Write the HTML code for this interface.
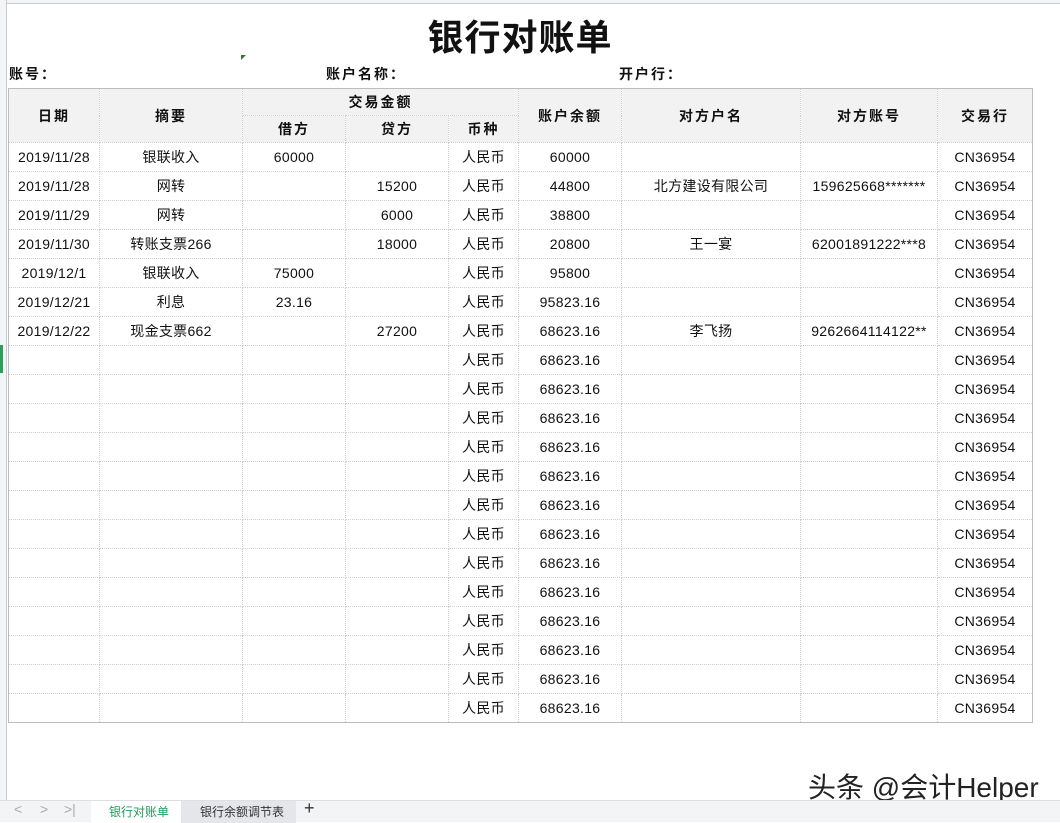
<!DOCTYPE html>
<html><head><meta charset="utf-8"><style>
*{margin:0;padding:0;box-sizing:border-box}
body{width:1060px;height:822px;background:#fff;position:relative;overflow:hidden;font-family:"Liberation Sans","Noto Sans CJK SC",sans-serif;color:#111}
.top{position:absolute;left:0;top:0;width:1060px;height:4px;border-bottom:1px solid #c8cdd4;background:#f3f4f6}
.rh{position:absolute;left:0;top:0;width:7px;height:800px;border-right:1px solid #c8cdd4;background:#f3f4f6}
.title{position:absolute;left:0;width:1040px;top:9px;text-align:center;font-size:36px;font-weight:bold;letter-spacing:1px}
.lab{position:absolute;top:64px;font-size:14px;font-weight:bold;letter-spacing:2px}
table{position:absolute;left:8px;top:88px;border-collapse:collapse;table-layout:fixed;border:1px solid #bdbdbd}
td,th{border:1px dotted #cfcfcf;text-align:center;font-size:14px;white-space:nowrap;overflow:hidden}
th{background:#f2f2f2;font-weight:bold;height:27px;letter-spacing:2px}
td{height:29px;letter-spacing:0.3px}
.tabs{position:absolute;left:0;top:800px;width:1060px;height:22px;background:#f3f4f6;border-top:1px solid #dcdfe3;font-size:12px;color:#333}
.tabs span{position:absolute;top:2px}
.wm{position:absolute;left:808px;top:766px;font-size:28px;color:#222;text-shadow:1px 1px 1px #fff,-1px -1px 1px #fff}
</style></head><body>
<div class="top"></div><div class="rh"></div>
<div class="title">银行对账单</div>
<div style="position:absolute;left:241px;top:55px;width:0;height:0;border-top:5px solid #2d7a2d;border-right:5px solid transparent"></div>
<div class="lab" style="left:9px">账号：</div>
<div class="lab" style="left:326px">账户名称：</div>
<div class="lab" style="left:619px">开户行：</div>
<table>
<colgroup><col style="width:91px"><col style="width:143px"><col style="width:103px"><col style="width:103px"><col style="width:70px"><col style="width:103px"><col style="width:179px"><col style="width:137px"><col style="width:95px"></colgroup>
<tr><th rowspan="2">日期</th><th rowspan="2">摘要</th><th colspan="3">交易金额</th><th rowspan="2">账户余额</th><th rowspan="2">对方户名</th><th rowspan="2">对方账号</th><th rowspan="2">交易行</th></tr>
<tr><th>借方</th><th>贷方</th><th>币种</th></tr>
<tr><td>2019/11/28</td><td>银联收入</td><td>60000</td><td></td><td>人民币</td><td>60000</td><td></td><td></td><td>CN36954</td></tr>
<tr><td>2019/11/28</td><td>网转</td><td></td><td>15200</td><td>人民币</td><td>44800</td><td>北方建设有限公司</td><td>159625668*******</td><td>CN36954</td></tr>
<tr><td>2019/11/29</td><td>网转</td><td></td><td>6000</td><td>人民币</td><td>38800</td><td></td><td></td><td>CN36954</td></tr>
<tr><td>2019/11/30</td><td>转账支票266</td><td></td><td>18000</td><td>人民币</td><td>20800</td><td>王一宴</td><td>62001891222***8</td><td>CN36954</td></tr>
<tr><td>2019/12/1</td><td>银联收入</td><td>75000</td><td></td><td>人民币</td><td>95800</td><td></td><td></td><td>CN36954</td></tr>
<tr><td>2019/12/21</td><td>利息</td><td>23.16</td><td></td><td>人民币</td><td>95823.16</td><td></td><td></td><td>CN36954</td></tr>
<tr><td>2019/12/22</td><td>现金支票662</td><td></td><td>27200</td><td>人民币</td><td>68623.16</td><td>李飞扬</td><td>9262664114122**</td><td>CN36954</td></tr>
<tr><td></td><td></td><td></td><td></td><td>人民币</td><td>68623.16</td><td></td><td></td><td>CN36954</td></tr>
<tr><td></td><td></td><td></td><td></td><td>人民币</td><td>68623.16</td><td></td><td></td><td>CN36954</td></tr>
<tr><td></td><td></td><td></td><td></td><td>人民币</td><td>68623.16</td><td></td><td></td><td>CN36954</td></tr>
<tr><td></td><td></td><td></td><td></td><td>人民币</td><td>68623.16</td><td></td><td></td><td>CN36954</td></tr>
<tr><td></td><td></td><td></td><td></td><td>人民币</td><td>68623.16</td><td></td><td></td><td>CN36954</td></tr>
<tr><td></td><td></td><td></td><td></td><td>人民币</td><td>68623.16</td><td></td><td></td><td>CN36954</td></tr>
<tr><td></td><td></td><td></td><td></td><td>人民币</td><td>68623.16</td><td></td><td></td><td>CN36954</td></tr>
<tr><td></td><td></td><td></td><td></td><td>人民币</td><td>68623.16</td><td></td><td></td><td>CN36954</td></tr>
<tr><td></td><td></td><td></td><td></td><td>人民币</td><td>68623.16</td><td></td><td></td><td>CN36954</td></tr>
<tr><td></td><td></td><td></td><td></td><td>人民币</td><td>68623.16</td><td></td><td></td><td>CN36954</td></tr>
<tr><td></td><td></td><td></td><td></td><td>人民币</td><td>68623.16</td><td></td><td></td><td>CN36954</td></tr>
<tr><td></td><td></td><td></td><td></td><td>人民币</td><td>68623.16</td><td></td><td></td><td>CN36954</td></tr>
<tr><td></td><td></td><td></td><td></td><td>人民币</td><td>68623.16</td><td></td><td></td><td>CN36954</td></tr>
</table>
<div style="position:absolute;left:0;top:345px;width:3px;height:28px;background:#2aa05a"></div>
<div class="wm">头条 @会计Helper</div>
<div class="tabs">
<span style="left:14px;color:#aaa;font-size:14px;top:0">&lt;</span>
<span style="left:40px;color:#aaa;font-size:14px;top:0">&gt;</span>
<span style="left:64px;color:#aaa;font-size:14px;top:0">&gt;|</span>
<div style="position:absolute;left:91px;top:0;width:90px;height:22px;background:#fff"></div>
<span style="left:109px;color:#1e9e5a">银行对账单</span>
<div style="position:absolute;left:181px;top:0;width:115px;height:22px;background:#e4e6ea"></div>
<span style="left:200px">银行余额调节表</span>
<span style="left:304px;font-size:18px;top:-3px">+</span>
</div>
</body></html>
